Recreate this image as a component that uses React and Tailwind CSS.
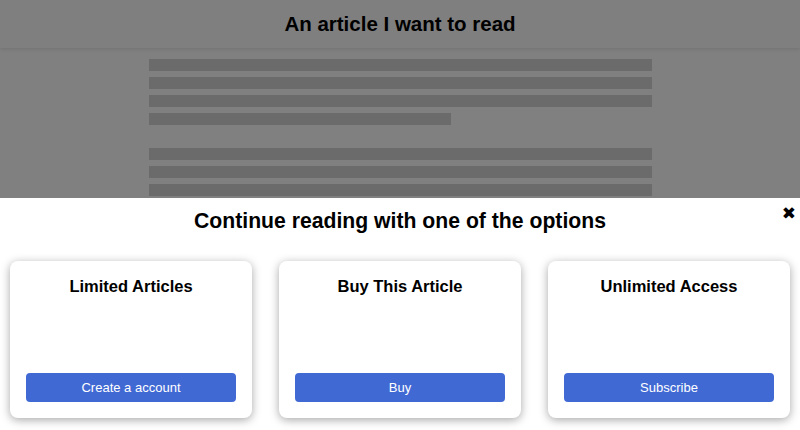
import React from "react";

const Card = ({ title, action }) => (
  <div className="flex h-[157px] flex-col items-center rounded-lg bg-white px-4 pb-4 pt-[15px] shadow-[0_2px_10px_rgba(0,0,0,0.35)]">
    <h3 className="text-[16.5px] font-bold leading-[20px] text-black">{title}</h3>
    <button className="mt-auto h-[29px] w-full rounded bg-[#4169d4] text-[13px] leading-[29px] text-white">
      {action}
    </button>
  </div>
);

export default function App() {
  return (
    <div className="relative h-[430px] w-[800px] overflow-hidden bg-[#808080] font-['Liberation_Sans',Arial,sans-serif]">
      <div className="flex h-[48px] items-center justify-center bg-[#7f7f7f] shadow-[0_1px_4px_rgba(0,0,0,0.12)]">
        <h1 className="text-[20.5px] font-bold text-black">An article I want to read</h1>
      </div>
      <div className="mx-auto mt-[11px] flex w-[503px] flex-col gap-[6px]">
        <div className="h-[12px] bg-[#6b6b6b]" />
        <div className="h-[12px] bg-[#6b6b6b]" />
        <div className="h-[12px] bg-[#6b6b6b]" />
        <div className="h-[12px] w-[302px] bg-[#6b6b6b]" />
        <div className="mt-[17px] h-[12px] bg-[#6b6b6b]" />
        <div className="h-[12px] bg-[#6b6b6b]" />
        <div className="h-[12px] bg-[#6b6b6b]" />
      </div>
      <div className="absolute bottom-0 left-0 right-0 top-[198px] bg-white">
        <h2 className="pt-[9px] text-center text-[21.2px] font-bold leading-[28px] text-black">
          Continue reading with one of the options
        </h2>
        <span className="absolute right-[4px] top-[4px] font-['DejaVu_Sans',sans-serif] text-[17px] leading-[22px] text-black">✖</span>
        <div className="mt-[26px] grid grid-cols-3 gap-[27px] px-[10px]">
          <Card title="Limited Articles" action="Create a account" />
          <Card title="Buy This Article" action="Buy" />
          <Card title="Unlimited Access" action="Subscribe" />
        </div>
      </div>
    </div>
  );
}
